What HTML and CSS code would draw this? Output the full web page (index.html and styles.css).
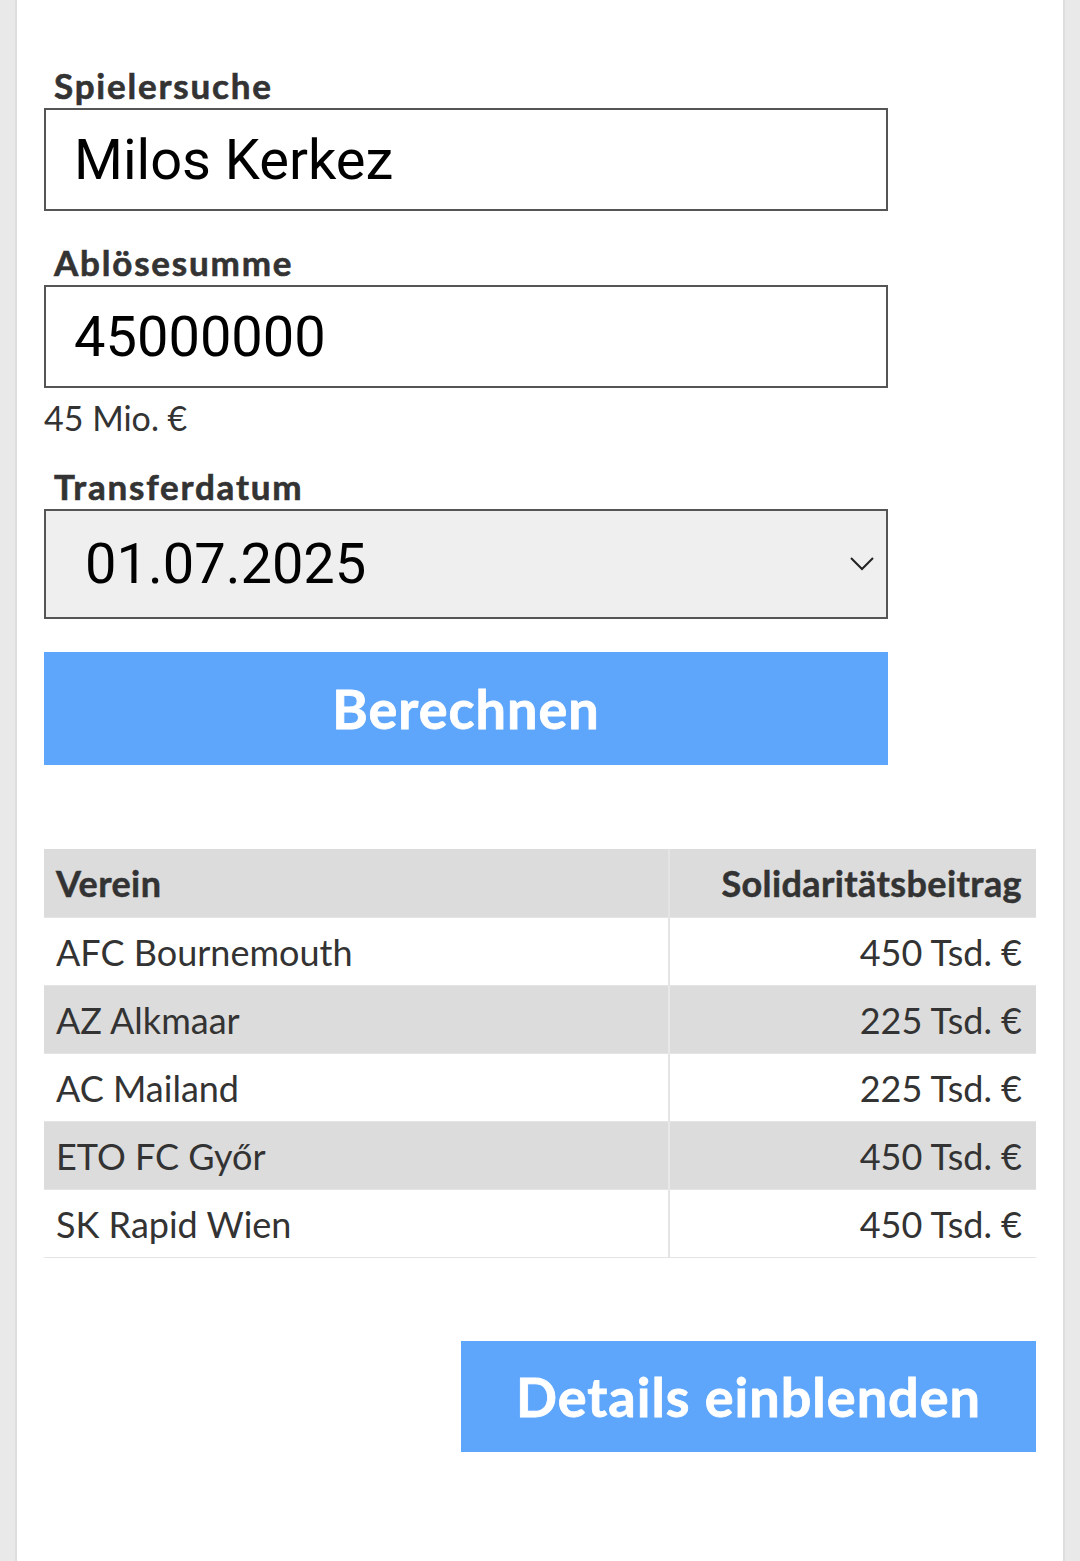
FILE: index.html
```html
<!DOCTYPE html>
<html lang="de">
<head>
<meta charset="utf-8">
<title>Solidaritätsbeitrag Rechner</title>
<link rel="stylesheet" href="styles.css">
</head>
<body>
<div class="page">
  <main class="panel">
    <form class="form">
      <div class="field">
        <label class="label">Spielersuche</label>
        <div class="input">Milos Kerkez</div>
      </div>
      <div class="field">
        <label class="label">Ablösesumme</label>
        <div class="input">45000000</div>
        <div class="hint">45 Mio. €</div>
      </div>
      <div class="field">
        <label class="label">Transferdatum</label>
        <div class="select">
          <span class="select-value">01.07.2025</span>
          <svg class="chevron" width="24" height="14" viewBox="0 0 24 14"><path d="M1 1 L12 12 L23 1" fill="none" stroke="#222" stroke-width="2"/></svg>
        </div>
      </div>
      <div class="btn btn-calc">Berechnen</div>
    </form>

    <table class="results">
      <thead>
        <tr><th class="col-club">Verein</th><th class="col-amount">Solidaritätsbeitrag</th></tr>
      </thead>
      <tbody>
        <tr><td>AFC Bournemouth</td><td class="num">450 Tsd. €</td></tr>
        <tr><td>AZ Alkmaar</td><td class="num">225 Tsd. €</td></tr>
        <tr><td>AC Mailand</td><td class="num">225 Tsd. €</td></tr>
        <tr><td>ETO FC Győr</td><td class="num">450 Tsd. €</td></tr>
        <tr><td>SK Rapid Wien</td><td class="num">450 Tsd. €</td></tr>
      </tbody>
    </table>

    <div class="actions">
      <div class="btn btn-details">Details einblenden</div>
    </div>
  </main>
</div>
</body>
</html>
```
FILE: styles.css
```css
html, body {
  margin: 0;
  padding: 0;
}
body {
  background: #e9e9e9;
  font-family: "Lato", "Liberation Sans", sans-serif;
  color: #333;
}
.page {
  padding: 0 15px;
  min-height: 1561px;
  box-sizing: border-box;
}
.panel {
  background: #fff;
  min-height: 1561px;
  border-left: 2px solid #dedede;
  border-right: 2px solid #dedede;
  padding: 62px 27px 0 27px;
  box-sizing: border-box;
}
.form {
  width: 844px;
}
.field {
  display: flex;
  flex-direction: column;
}
.label {
  font-weight: 700;
  font-size: 35px;
  line-height: 46px;
  letter-spacing: 1.8px;
  -webkit-text-stroke: 0.6px #333;
  padding-left: 10px;
  color: #333;
}
.input {
  height: 103px;
  border: 2px solid #555;
  box-sizing: border-box;
  font-family: "Roboto", sans-serif;
  font-size: 56px;
  color: #000;
  display: flex;
  align-items: center;
  padding-left: 28px;
  margin-bottom: 28px;
}
.field:nth-child(2) .input {
  margin-bottom: 8px;
}
.hint {
  font-size: 34px;
  line-height: 44px;
  color: #333;
  margin-bottom: 23px;
}
.select {
  height: 110px;
  border: 2px solid #555;
  box-sizing: border-box;
  background: #efefef;
  display: flex;
  align-items: center;
  justify-content: space-between;
  padding: 0 12px 0 39px;
  font-family: "Roboto", sans-serif;
  font-size: 56px;
  color: #000;
  margin-bottom: 33px;
}
.btn {
  background: #5da6fc;
  color: #fff;
  font-weight: 700;
  font-size: 54px;
  letter-spacing: 1px;
  -webkit-text-stroke: 0.8px #fff;
  display: flex;
  align-items: center;
  justify-content: center;
}
.btn-calc {
  height: 113px;
}
.results {
  margin-top: 84px;
  width: 992px;
  border-collapse: collapse;
  font-size: 36px;
  color: #333;
}
.results th, .results td {
  height: 67px;
  padding: 0 12px;
  text-align: left;
  border-bottom: 1px solid #e4e4e4;
}
.results th {
  background: #dcdcdc;
  font-weight: 700;
  letter-spacing: 0.4px;
  -webkit-text-stroke: 0.5px #333;
  height: 68px;
}
.results th + th, .results td + td {
  border-left: 2px solid #e4e4e4;
}
.results .col-club {
  width: 600px;
}
.results .col-amount, .results .num {
  text-align: right;
  padding-right: 14px;
}
.results tbody tr:nth-child(even) td {
  background: #dcdcdc;
}
.results tbody tr:nth-child(even) td + td {
  border-left-color: #e8e8e8;
}
.actions {
  display: flex;
  justify-content: flex-end;
  width: 992px;
  margin-top: 83px;
}
.btn-details {
  width: 575px;
  height: 111px;
}
```
